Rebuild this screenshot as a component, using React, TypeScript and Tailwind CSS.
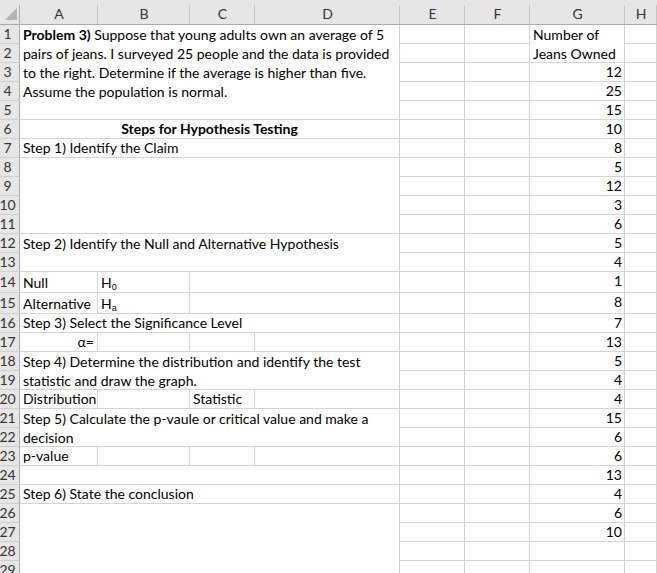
import React from "react";

const G = "border-r border-b border-[#d4d4d4]";

function Blank() {
  return <div className="border-r border-b border-[#d4d4d4]" />;
}

function RH({ n }: { n: number }) {
  return (
    <div className="bg-[#e6e6e6] border-r border-r-[#ababab] border-b border-b-[#cfcfcf] flex items-center justify-center pr-[4px] text-[14px] text-[#333] leading-none">
      {n}
    </div>
  );
}

function ColHead({ l }: { l: string }) {
  return (
    <div className="relative bg-[#e6e6e6] border-b border-[#ababab] flex items-center justify-center pt-[4px] text-[14px] text-[#333] leading-none after:absolute after:right-0 after:top-[5px] after:bottom-0 after:w-px after:bg-[#c6c6c6]">
      {l}
    </div>
  );
}

function Corner() {
  return (
    <div className="relative bg-[#e6e6e6] border-b border-[#ababab] after:absolute after:right-0 after:top-[5px] after:bottom-0 after:w-px after:bg-[#ababab]">
      <svg width="19" height="24" viewBox="0 0 19 24" className="block">
        <polygon points="5,20 17,20 17,8" fill="#b4b4b4" />
      </svg>
    </div>
  );
}

function Num({ v }: { v: number }) {
  return <div className={`${G} text-right pr-[2px] leading-[18px]`}>{v}</div>;
}

function Tail({ v }: { v?: number }) {
  return (
    <>
      <Blank />
      <Blank />
      {v === undefined ? <Blank /> : <Num v={v} />}
      <Blank />
    </>
  );
}

function Txt({ children, cls }: { children?: React.ReactNode; cls?: string }) {
  return <div className={`${G} px-[3px] leading-[18px] whitespace-nowrap ${cls ?? ""}`}>{children}</div>;
}

export default function App() {
  return (
    <div className="w-[657px] h-[573px] overflow-hidden bg-white font-['Lato','Liberation_Sans',sans-serif] text-[14px] text-black">
      <div className="grid grid-cols-[20px_78px_92px_65px_145px_65px_65px_95px_1fr] grid-rows-[25px_repeat(13,19px)_21px_21px_repeat(14,19px)]">
        <Corner />
        {["A", "B", "C", "D", "E", "F", "G", "H"].map((l) => (
          <ColHead key={l} l={l} />
        ))}

        {/* Row 1 */}
        <RH n={1} />
        <div className="col-span-4 row-span-5 border-r border-b border-[#d4d4d4] px-[3px] leading-[19px] whitespace-nowrap">
          <div>
            <span className="font-bold">Problem 3)</span> Suppose that young adults own an average of 5
          </div>
          <div>pairs of jeans. I surveyed 25 people and the data is provided</div>
          <div>to the right. Determine if the average is higher than five.</div>
          <div>Assume the population is normal.</div>
        </div>
        <Blank />
        <Blank />
        <div className="row-span-2 border-r border-b border-[#d4d4d4] px-[3px] leading-[19px] whitespace-nowrap">
          <div>Number of</div>
          <div>Jeans Owned</div>
        </div>
        <Blank />

        {/* Row 2 */}
        <RH n={2} />
        <Blank />
        <Blank />
        <Blank />

        <RH n={3} />
        <Tail v={12} />
        <RH n={4} />
        <Tail v={25} />
        <RH n={5} />
        <Tail v={15} />

        {/* Row 6 */}
        <RH n={6} />
        <Txt cls="col-span-4 text-center font-bold">Steps for Hypothesis Testing</Txt>
        <Tail v={10} />

        {/* Row 7 */}
        <RH n={7} />
        <Txt cls="col-span-4">Step 1) Identify the Claim</Txt>
        <Tail v={8} />

        {/* Rows 8-11 */}
        <RH n={8} />
        <div className="col-span-4 row-span-4 border-r border-b border-[#d4d4d4]" />
        <Tail v={5} />
        <RH n={9} />
        <Tail v={12} />
        <RH n={10} />
        <Tail v={3} />
        <RH n={11} />
        <Tail v={6} />

        {/* Rows 12-13 */}
        <RH n={12} />
        <div className="col-span-4 row-span-2 border-r border-b border-[#d4d4d4] px-[3px] leading-[19px] whitespace-nowrap">
          Step 2) Identify the Null and Alternative Hypothesis
        </div>
        <Tail v={5} />
        <RH n={13} />
        <Tail v={4} />

        {/* Row 14 */}
        <RH n={14} />
        <Txt cls="pt-[2px]">Null</Txt>
        <Txt cls="pt-[2px]">
          H<sub className="text-[9px] font-['Liberation_Sans',sans-serif]">0</sub>
        </Txt>
        <div className="col-span-2 border-r border-b border-[#d4d4d4]" />
        <Tail v={1} />

        {/* Row 15 */}
        <RH n={15} />
        <Txt cls="pt-[2px]">Alternative</Txt>
        <Txt cls="pt-[2px]">
          H<sub className="text-[9px] font-['Liberation_Sans',sans-serif]">a</sub>
        </Txt>
        <div className="col-span-2 border-r border-b border-[#d4d4d4]" />
        <Tail v={8} />

        {/* Row 16 */}
        <RH n={16} />
        <Txt cls="col-span-4">Step 3) Select the Significance Level</Txt>
        <Tail v={7} />

        {/* Row 17 */}
        <RH n={17} />
        <Txt cls="text-right">α=</Txt>
        <Blank />
        <Blank />
        <Blank />
        <Tail v={13} />

        {/* Rows 18-19 */}
        <RH n={18} />
        <div className="col-span-4 row-span-2 border-r border-b border-[#d4d4d4] px-[3px] leading-[19px] whitespace-nowrap">
          <div>Step 4) Determine the distribution and identify the test</div>
          <div>statistic and draw the graph.</div>
        </div>
        <Tail v={5} />
        <RH n={19} />
        <Tail v={4} />

        {/* Row 20 */}
        <RH n={20} />
        <Txt>Distribution</Txt>
        <Blank />
        <Txt>Statistic</Txt>
        <Blank />
        <Tail v={4} />

        {/* Rows 21-22 */}
        <RH n={21} />
        <div className="col-span-4 row-span-2 border-r border-b border-[#d4d4d4] px-[3px] leading-[19px] whitespace-nowrap">
          <div>Step 5) Calculate the p-vaule or critical value and make a</div>
          <div>decision</div>
        </div>
        <Tail v={15} />
        <RH n={22} />
        <Tail v={6} />

        {/* Row 23 */}
        <RH n={23} />
        <Txt>p-value</Txt>
        <Blank />
        <Blank />
        <Blank />
        <Tail v={6} />

        {/* Row 24 */}
        <RH n={24} />
        <div className="col-span-4 border-r border-b border-[#d4d4d4]" />
        <Tail v={13} />

        {/* Row 25 */}
        <RH n={25} />
        <Txt cls="col-span-4">Step 6) State the conclusion</Txt>
        <Tail v={4} />

        {/* Rows 26-29 */}
        <RH n={26} />
        <div className="col-span-4 row-span-4 border-r border-b border-[#d4d4d4]" />
        <Tail v={6} />
        <RH n={27} />
        <Tail v={10} />
        <RH n={28} />
        <Tail />
        <RH n={29} />
        <Tail />
      </div>
    </div>
  );
}
